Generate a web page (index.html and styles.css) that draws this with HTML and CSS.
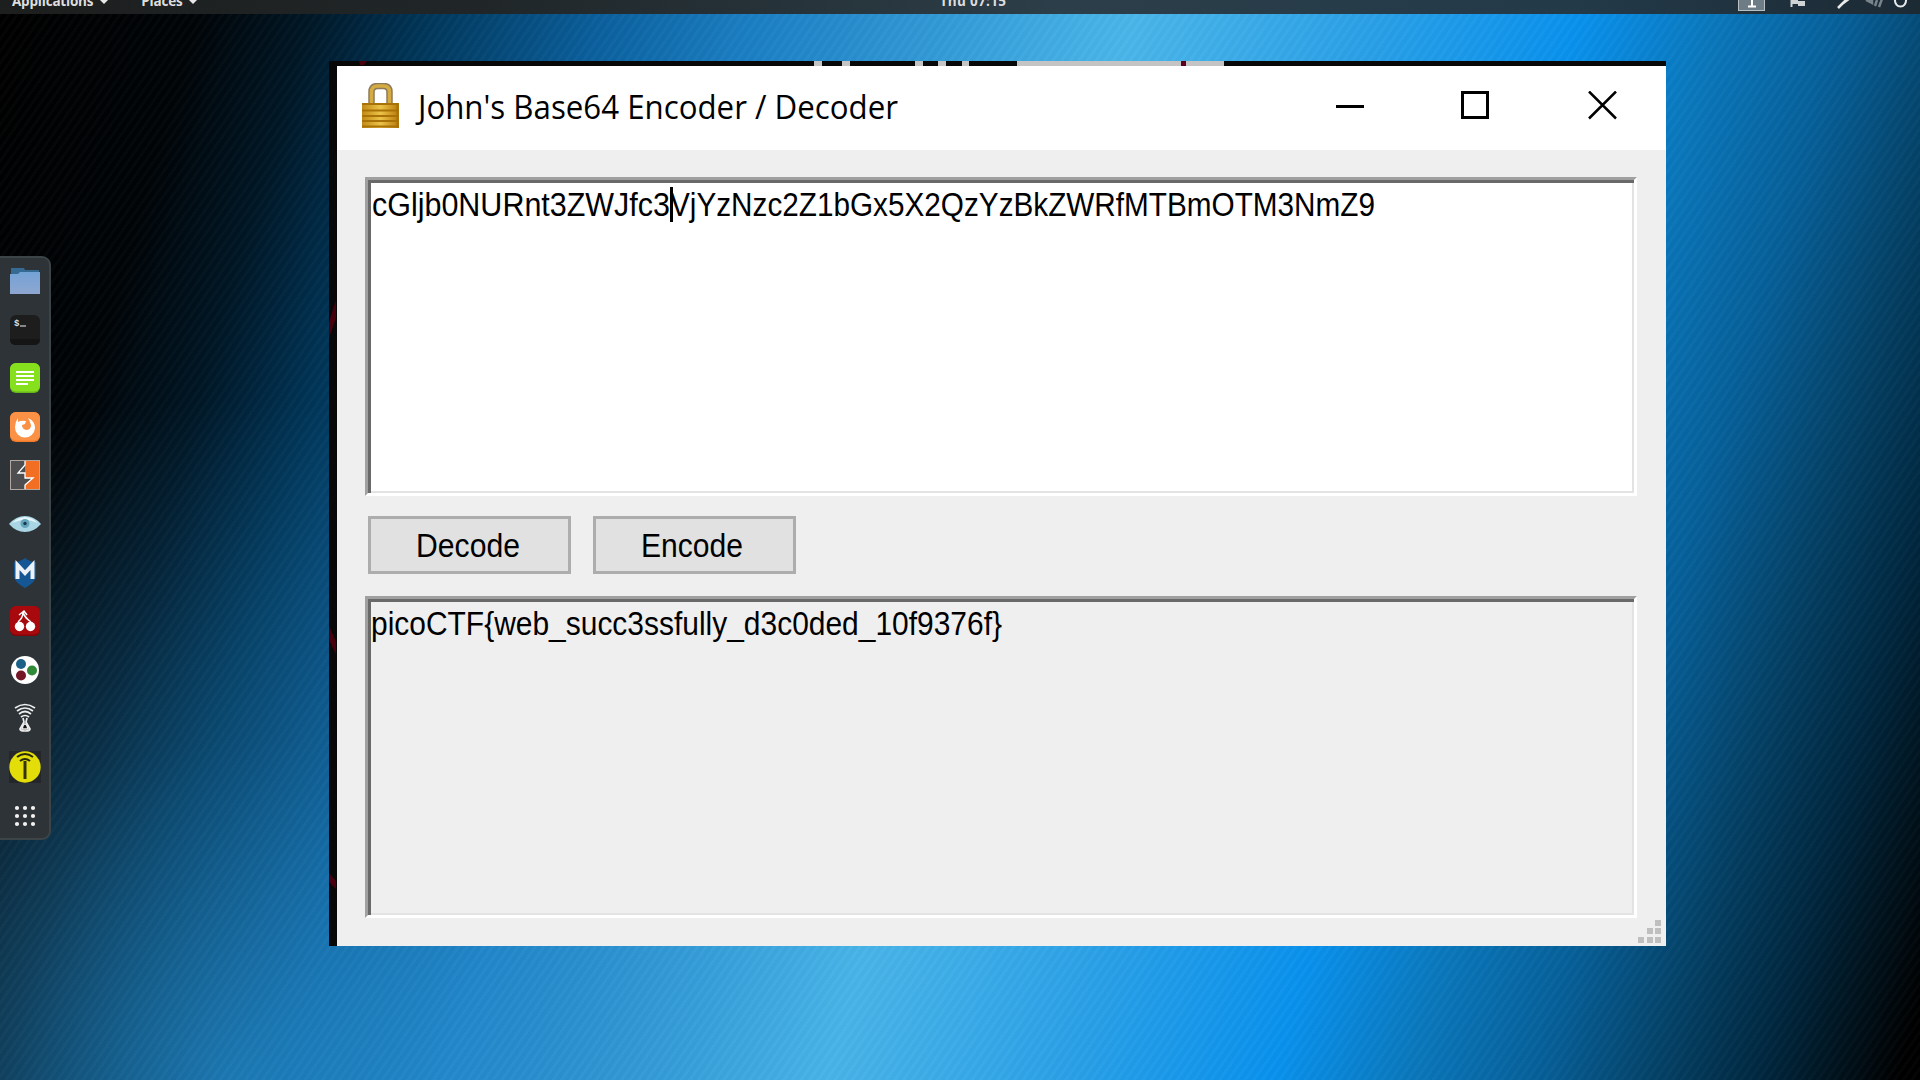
FILE: index.html
```html
<!DOCTYPE html>
<html lang="en">
<head>
<meta charset="utf-8">
<title>John's Base64 Encoder / Decoder</title>
<link rel="stylesheet" href="styles.css">
</head>
<body>
<div class="desktop">
  <header class="panel">
    <div class="menus"><span class="menu apps">Applications<i class="caret"></i></span><span class="menu places">Places<i class="caret"></i></span></div>
    <div class="clock"><span>Thu 07:15</span></div>
    <div class="tray">
      <svg width="190" height="14" viewBox="0 0 190 14">
        <rect x="8.500" y="-8" width="26" height="18.500" fill="#6d7c85" stroke="#b9c1c5"/>
        <path d="M22 0v6M18 6.500h8" stroke="#fff" stroke-width="2"/>
        <path d="M61.500 0v7" stroke="#d0d3d4" stroke-width="2"/><path d="M62 0h6v4h-6zM68 1h7v5h-7z" fill="#d0d3d4"/>
        <path d="M117-1l-5 5-4 4M120-2l-8 6" stroke="#e8eaeb" stroke-width="2.500" fill="none"/>
        <path d="M136 0l6 3v-3M145 6l2-6M149 7l3-8" stroke="#77838a" stroke-width="2.500" fill="#77838a"/>
        <path d="M165-1c-1 10 12 10 11 0" stroke="#e6e8e9" stroke-width="2" fill="none"/>
      </svg>
    </div>
  </header>

  <nav class="dock">
    <svg class="icon" viewBox="0 0 32 32"><defs><linearGradient id="f" x2="0" y2="1"><stop offset="0" stop-color="#74a3d6"/><stop offset="1" stop-color="#8ea6d0"/></linearGradient></defs><path d="M2 3h13l1 2h14v8H2z" fill="#356a93"/><path d="M1 9h8l2-2h20v22H1z" fill="url(#f)"/></svg>
    <svg class="icon" viewBox="0 0 32 32"><rect x="1" y="1" width="30" height="30" rx="6" fill="#1d1d1d"/><path d="M1 25v1a5 5 0 0 0 5 5h20a5 5 0 0 0 5-5v-1" fill="#151515"/><text x="5" y="12" class="prompt">$</text><path d="M11 12h6" stroke="#aaa" stroke-width="1.500"/></svg>
    <svg class="icon" viewBox="0 0 32 32"><rect x="1" y="1" width="30" height="30" rx="6" fill="#67b51c"/><rect x="1" y="1" width="30" height="28.500" rx="6" fill="#86e01e"/><path d="M7 10h18M7 14h18M7 18h18M7 22h12" stroke="#fff" stroke-width="2"/></svg>
    <svg class="icon" viewBox="0 0 32 32"><rect x="1" y="1" width="30" height="30" rx="6" fill="#f27a2b"/><rect x="1" y="1" width="30" height="28.500" rx="6" fill="#fb9144"/><path d="M6 16q0-5 3-9v4q3-2 8-1l-1 3-3 1q0 4 4 5 5 0 5-5-1-4-3-7 7 3 7 10a10 10 0 0 1-20-1z" fill="#fff"/></svg>
    <svg class="icon" viewBox="0 0 32 32"><rect x="1.500" y="1.500" width="29" height="29" fill="#4e4e50"/><path d="M16 2h14v28H16v-5l8-6h-8v-6z" fill="#f26e22"/><path d="M16 2v4l-7 8h7v5h8l-8 7v4" fill="none" stroke="#fff" stroke-width="1.300"/><rect x="1.500" y="1.500" width="29" height="29" fill="none" stroke="#b1a6a0"/></svg>
    <svg class="icon" viewBox="0 0 32 32"><path d="M0 16Q7 8 16 8t16 8q-7 8-16 8T0 16z" fill="#a9d5e4"/><path d="M3 15Q9 9 16 9t13 6q-7-3-13-3T3 15z" fill="#e5f5fa"/><circle cx="16" cy="15.500" r="4.500" fill="#65a5bb"/><circle cx="16" cy="15.500" r="1.700" fill="#173a4c"/></svg>
    <svg class="icon" viewBox="0 0 32 32"><path d="M5 5q6 0 11-4 5 4 11 4v14q0 6-11 12Q5 25 5 19z" fill="#155795"/><path d="M8.500 22V8l7.500 8 7.500-8v14" stroke="#edf1f8" stroke-width="4" fill="none"/></svg>
    <svg class="icon" viewBox="0 0 32 32"><rect x="1" y="1" width="30" height="30" rx="6" fill="#850408"/><rect x="1" y="1" width="30" height="28.500" rx="6" fill="#a8090d"/><circle cx="10.500" cy="21.500" r="4.700" fill="#fff"/><circle cx="21.500" cy="21.500" r="4.700" fill="#fff"/><path d="M9 17q5-4 5-10 1 5 8 10M10 10l5-4 3 4" fill="none" stroke="#fff" stroke-width="1.500"/></svg>
    <svg class="icon" viewBox="0 0 32 32"><circle cx="16" cy="16" r="14" fill="#fff"/><circle cx="12" cy="10" r="5" fill="#1c6288"/><circle cx="23" cy="16.500" r="5" fill="#318a37"/><circle cx="12" cy="21.500" r="5" fill="#761728"/></svg>
    <svg class="icon" viewBox="0 0 32 32" fill="none" stroke="#eee" stroke-width="1.700"><path d="M6 6q10-7 20 0M8 9q8-6 16 0M10 12q6-5 12 0M12 15q4-3 8 0"/><path d="M14 16l1 4-4 7q0 2 5 2t5-2l-4-7 1-4"/><path d="M13 27q1-5 3-5t3 5z" fill="#111"/></svg>
    <svg class="icon" viewBox="0 0 32 32"><path d="M0 0h32v32H0z" fill="#24262a"/><circle cx="16" cy="16" r="15.700" fill="#e3de09"/><path d="M8 6q8-6 16 0M11 10q5-4 10 0" stroke="#292908" stroke-width="2" fill="none"/><path d="M14.500 10h3v18h-3z" fill="#35340a"/></svg>
    <svg class="icon" viewBox="0 0 32 32" fill="#f2f2f2"><circle cx="8" cy="8" r="2.100"/><circle cx="16" cy="8" r="2.100"/><circle cx="24" cy="8" r="2.100"/><circle cx="8" cy="16" r="2.100"/><circle cx="16" cy="16" r="2.100"/><circle cx="24" cy="16" r="2.100"/><circle cx="8" cy="24" r="2.100"/><circle cx="16" cy="24" r="2.100"/><circle cx="24" cy="24" r="2.100"/></svg>
  </nav>

  <main class="frame">
    <svg class="behind" width="1337" height="885" viewBox="0 0 1337 885"><g fill="#c4c4c4"><path d="M485 0h8v5h-8zM513 0h8v5h-8zM586 0h8v5h-8zM609 0h8v5h-8zM633 0h7v5h-7zM688 0h207v5H688z"/></g><path d="M852 0h5v5h-5z" fill="#5c0019"/><path d="M30 0h8l-3 4h-4zM0 261l7-22v18l-7 20zM0 565l7 16v12l-7-14zM0 812l7 8v8l-7-7z" fill="#48000c"/></svg>
    <section class="window">
      <div class="titlebar">
        <svg class="lock" width="37" height="45" viewBox="0 0 37 45"><defs><linearGradient id="g"><stop offset="0" stop-color="#c08a16"/><stop offset=".5" stop-color="#ecc248"/><stop offset="1" stop-color="#b87a0b"/></linearGradient></defs><path d="M9.500 22V9q0-6 6-6h6q6 0 6 6v13" fill="none" stroke="#8d7a58" stroke-width="6.500"/><path d="M9.500 22V9q0-6 6-6h6q6 0 6 6v13" fill="none" stroke="#d5ac42" stroke-width="3.500"/><path d="M0 20h37v25H0z" fill="url(#g)"/><path d="M0 21h37M0 27.500h37M0 33h37M0 38h37M0 43.500h37M35.500 20v25" stroke="#a87208" stroke-width="2"/></svg>
        <h1 class="title"><svg width="490" height="50"><text x="1" y="36" textLength="480" lengthAdjust="spacingAndGlyphs">John's Base64 Encoder / Decoder</text></svg></h1>
        <svg class="controls" width="284" height="30" viewBox="0 0 284 30" fill="none" stroke="#000"><path d="M0 15.500h28" stroke-width="3"/><path d="M126.500 1.500h25v25h-25z" stroke-width="3"/><path d="M253 .5l27 27M280 .5l-27 27" stroke-width="2.500"/></svg>
      </div>
      <div class="content">
        <div class="box input"><svg width="1020" height="46"><text x="1" y="31" textLength="298" lengthAdjust="spacingAndGlyphs">cGljb0NURnt3ZWJfc3</text><text x="299" y="31" textLength="705" lengthAdjust="spacingAndGlyphs">VjYzNzc2Z1bGx5X2QzYzBkZWRfMTBmOTM3NmZ9</text><path d="M300.500 2v35" stroke="#000" stroke-width="3"/></svg></div>
        <div class="buttons">
          <button class="button"><svg width="106" height="44"><text x="0" y="34" textLength="104" lengthAdjust="spacingAndGlyphs">Decode</text></svg></button>
          <button class="button"><svg width="106" height="44"><text x="0" y="34" textLength="102" lengthAdjust="spacingAndGlyphs">Encode</text></svg></button>
        </div>
        <div class="box output"><svg width="700" height="46"><text x="0" y="31" textLength="631" lengthAdjust="spacingAndGlyphs">picoCTF{web_succ3ssfully_d3c0ded_10f9376f}</text></svg></div>
        <svg class="grip" width="23" height="23" viewBox="0 0 23 23" fill="#bfbfbf"><path d="M17 0h6v6h-6zM9 8h6v6H9zM17 8h6v6h-6zM0 17h6v6H0zM9 17h6v6H9zM17 17h6v6h-6z"/></svg>
      </div>
    </section>
  </main>
</div>
</body>
</html>
```
FILE: styles.css
```css
* { box-sizing: border-box; }
body { margin: 0; }
.desktop {
  position: relative;
  width: 1920px;
  height: 1080px;
  overflow: hidden;
  display: grid;
  grid-template: 14px 47px 195px 1fr / 50px 279px 1fr;
  background:
    repeating-linear-gradient(125deg, rgba(255,255,255,.02) 0 3px, rgba(0,0,0,.02) 3px 7px),
    radial-gradient(ellipse 750px 680px at 230px 1080px, rgba(50,160,225,.5), rgba(50,150,210,.2) 50%, transparent),
    linear-gradient(106.100deg, #000 0, #000407 9%, #001625 14%, #003456 19%, #0a5f9c 27%, #1b7fc4 34%, #4ab6ea 51%, #2aa0e8 62%, #0992ee 71%, #0a78bd 77%, #065f98 83%, #044268 88%, #00263d 93%, #000 99%);
}
.panel {
  grid-column: 1 / -1;
  display: grid;
  grid-template-columns: 1fr 140px 1fr;
  height: 14px;
  overflow: hidden;
  background: linear-gradient(90deg, #1d1e1e, #202628 25%, #2c3e49 55%, #233a49 82%, #1c2a34);
  color: #dedede;
}
.menus { display: flex; gap: 33px; padding-left: 12px; margin-top: -9px; }
.menu { display: flex; align-items: center; gap: 7px; }
.caret { border: 4px solid transparent; border-top-color: #e8e8e8; margin-top: 5px; }
.menu, .clock span { font: bold 13.500px/20px "Open Sans", sans-serif; letter-spacing: -.200px; height: 20px; }
.clock { text-align: center; margin-top: -9px; padding-left: 26px; white-space: nowrap; }
.clock span { display: block; letter-spacing: .300px; }
.tray { display: flex; justify-content: flex-end; }
.dock {
  grid-row: 4;
  display: flex;
  flex-direction: column;
  align-items: flex-start;
  gap: 16.600px;
  width: 51px;
  height: 584px;
  padding: 7px 0 0 9px;
  background: #2d3336;
  border: 2px solid #3c4448;
  border-left: 0;
  border-radius: 0 9px 9px 0;
}
.icon { width: 32px; height: 32px; flex: none; }
.icon .prompt { font: bold 9px "Liberation Mono", monospace; fill: #ddd; }
.frame {
  position: relative;
  grid-area: 3 / 3 / 5 / 4;
  width: 1337px;
  height: 885px;
  padding: 5px 0 0 8px;
  background: #080808;
}
.behind { position: absolute; inset: 0; }
.window {
  position: relative;
  display: flex;
  flex-direction: column;
  height: 880px;
  background: #efefef;
}
.titlebar { display: flex; align-items: flex-start; height: 84px; background: #fff; padding: 17px 46px 0 25px; }
.title { margin: 0 0 0 18px; flex: 1; height: 50px; font-weight: 400; }
.controls { margin-top: 8px; }
text { font: 33px "Liberation Sans", sans-serif; }
.titlebar .title text { font: 32px "Open Sans", sans-serif; }
.title svg, .box svg, .button svg { display: block; overflow: visible; }
.content { position: relative; padding: 27px 29px 28px 28px; display: flex; flex-direction: column; }
.box {
  height: 319px;
  border: 3px solid #a0a0a0;
  border-right-color: #fff;
  border-bottom-color: #fff;
  box-shadow: inset 3px 3px #696969, inset -2px -2px #e3e3e3;
  padding: 5px 0 0 3px;
}
.input { background: #fff; }
.output { height: 322px; }
.buttons { display: flex; gap: 22px; height: 58px; margin: 20px 0 22px 3px; }
.button { width: 203px; padding: 0 0 0 45px; border: 3px solid #adadad; background: #e1e1e1; display: flex; align-items: center; }
.grip { position: absolute; right: 5px; bottom: 3px; }
```
